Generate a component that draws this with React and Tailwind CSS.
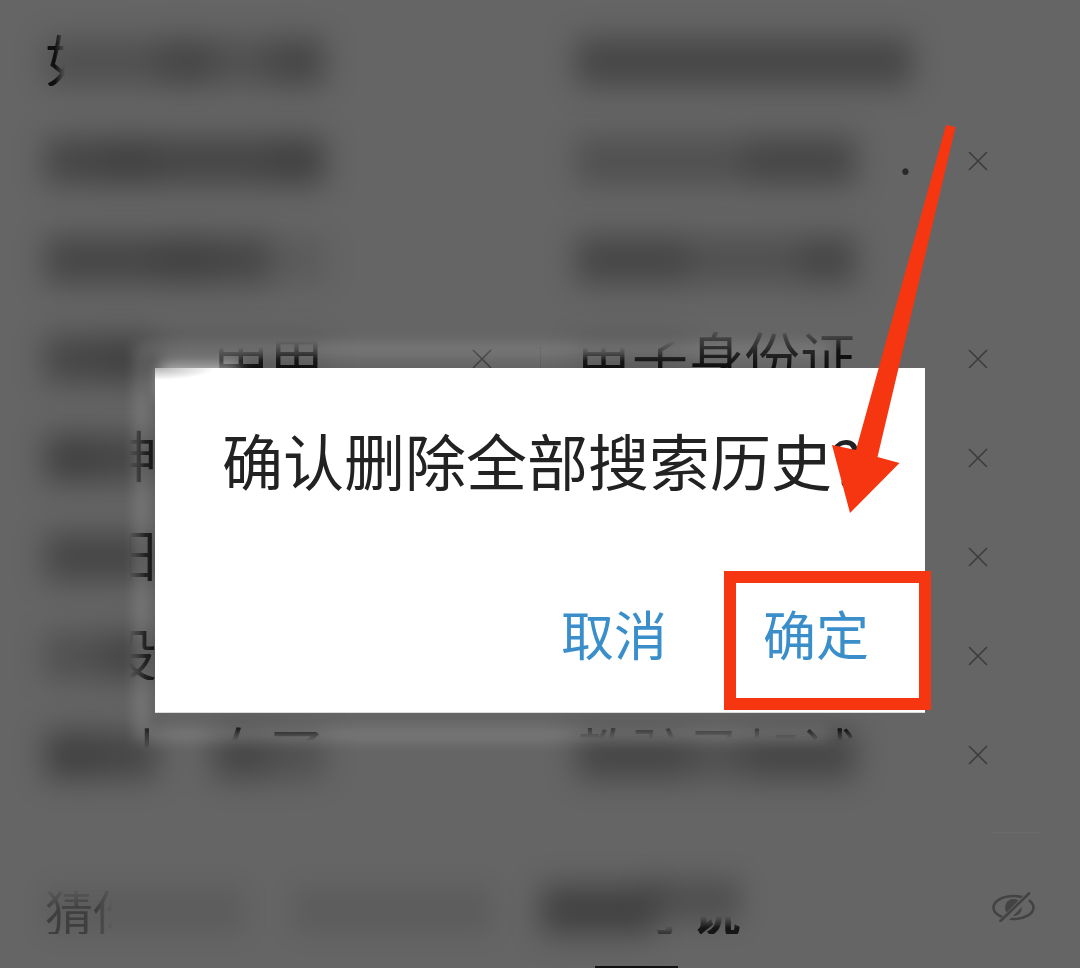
import React from "react";

const SHADES = {
  0: "bg-transparent",
  1: "bg-black/10",
  2: "bg-black/20",
  3: "bg-black/30",
  4: "bg-black/35",
};

const FADES = {
  leftEdge: "[mask-image:linear-gradient(to_right,black_10px,transparent_20px)]",
  rightEdge: "[mask-image:linear-gradient(to_right,transparent_28px,black_44px)]",
  lowerHalf: "[mask-image:linear-gradient(to_bottom,transparent_20px,black_34px)]",
  lowerThird: "[mask-image:linear-gradient(to_bottom,transparent_14px,black_32px)]",
  lowerMost: "[mask-image:linear-gradient(to_bottom,transparent,black_24px)]",
  topEdge: "[mask-image:linear-gradient(to_bottom,black_6px,transparent_18px)]",
  topFaint: "opacity-70 [mask-image:linear-gradient(to_bottom,black_4px,transparent_16px)]",
  topRight:
    "[mask-composite:intersect] [mask-image:linear-gradient(to_bottom,black_8px,transparent_26px),linear-gradient(to_right,transparent_38px,black_40px)]",
  dot: "text-right text-5xl opacity-70",
};

const rows = [
  {
    left: { chars: [["如", "leftEdge"]], smudge: [2, 2, 3, 2, 3] },
    right: { chars: [], smudge: [3, 3, 3, 3, 3, 3] },
  },
  {
    left: { chars: [], smudge: [3, 4, 3, 3, 4] },
    right: { chars: [[""], [""], [""], [""], [""], [".", "dot"]], smudge: [2, 2, 2, 3, 3], close: true },
  },
  {
    left: { chars: [], smudge: [3, 3, 4, 3, 1] },
    right: { chars: [], smudge: [3, 3, 2, 2, 3] },
  },
  {
    left: { chars: [[""], [""], [""], ["申", "lowerHalf"], ["电", "lowerThird"]], smudge: [3, 4, 1, 1, 1], close: true },
    right: {
      chars: [["电", "lowerHalf"], ["子", "lowerThird"], ["身", "lowerMost"], ["份", "lowerMost"], ["证", "lowerMost"]],
      smudge: [1, 1],
      close: true,
    },
    divider: true,
  },
  {
    left: { chars: [[""], ["神", "rightEdge"]], smudge: [4, 3] },
    right: { chars: [], smudge: [0], close: true },
  },
  {
    left: { chars: [[""], ["阳", "rightEdge"]], smudge: [3, 3] },
    right: { chars: [], smudge: [0], close: true },
  },
  {
    left: { chars: [[""], ["设", "rightEdge"]], smudge: [2, 3] },
    right: { chars: [], smudge: [0], close: true },
  },
  {
    left: { chars: [[""], ["引", "topRight"], [""], ["女", "topEdge"], ["了", "topEdge"]], smudge: [4, 3, 0, 3, 2] },
    right: {
      chars: [["教", "topFaint"], ["驻", "topFaint"], ["马", "topFaint"], ["加", "topFaint"], ["试", "topEdge"]],
      smudge: [3, 3, 2, 3, 3],
      close: true,
    },
  },
];

function CloseIcon() {
  return (
    <svg viewBox="0 0 20 20" className="size-5" fill="none" stroke="#3c3c3e" strokeWidth="1.6" aria-hidden="true">
      <path d="M1 1 19 19M19 1 1 19" />
    </svg>
  );
}

function EyeOffIcon() {
  return (
    <svg viewBox="0 0 44 30" className="h-[30px] w-11" fill="none" aria-hidden="true">
      <ellipse cx="21.5" cy="15.5" rx="20" ry="11.500" stroke="#434343" strokeWidth="2.6" />
      <circle cx="21.5" cy="15.5" r="8.5" fill="#434343" />
      <path d="M40 0 9 31" stroke="#656565" strokeWidth="7" />
      <path d="M37 1.5 8.5 29" stroke="#434343" strokeWidth="2.6" strokeLinecap="round" />
    </svg>
  );
}

function Smudge({ shades }) {
  return (
    <div className="absolute inset-y-0 left-0 flex items-center blur-[15px]" aria-hidden="true">
      {shades.map((s, i) => (
        <span key={i} className={`h-12 w-14 ${SHADES[s]}`} />
      ))}
    </div>
  );
}

function HistoryCell({ item, className }) {
  return (
    <div className={`flex h-[99px] items-center justify-between ${className}`}>
      <div className="relative flex h-full items-center pb-2">
        <Smudge shades={item.smudge} />
        <div className="relative flex text-[56px] leading-none text-[#101010]">
          {item.chars.map(([ch, fade], i) => (
            <span key={i} className={`h-14 w-14 ${FADES[fade] || ""}`}>
              {ch}
            </span>
          ))}
        </div>
      </div>
      {item.close && (
        <button type="button" aria-label="删除">
          <CloseIcon />
        </button>
      )}
    </div>
  );
}

function Dialog() {
  return (
    <div className="absolute inset-x-0 top-[368px] flex justify-center">
      <div className="relative w-[770px]">
        <div
          className="absolute -top-6 right-24 -bottom-7 -left-5 border-[12px] border-r-0 border-white/15 blur-[7px]"
          aria-hidden="true"
        />
        <div className="absolute -top-1 left-1 h-8 w-20 bg-white/60 blur-[8px]" aria-hidden="true" />
        <section
          role="dialog"
          aria-labelledby="dialog-title"
          className="relative border-b border-[#dcdcdc] bg-white bg-[radial-gradient(ellipse_60px_12px_at_0_0,#b4b4b4,#ffffff)] pt-[62px] pr-14 pb-[49px] pl-[67px]"
        >
          <h1 id="dialog-title" className="text-[61px] leading-[60px] whitespace-nowrap text-[#222222]">
            确认删除全部搜索历史?
          </h1>
          <div className="mt-[113px] flex justify-end gap-24 text-[53px] leading-[60px] text-[#3a8fcb]">
            <button type="button">取消</button>
            <div className="relative flex">
              <button type="button">确定</button>
              <div className="pointer-events-none absolute -top-8 -right-[62px] -bottom-[47px] -left-[39px] border-12 border-[#f53611]" />
            </div>
          </div>
        </section>
        <svg
          viewBox="0 0 70 390"
          className="pointer-events-none absolute -top-[244px] right-[25px] h-[390px] w-[70px] overflow-visible"
          aria-hidden="true"
        >
          <path d="M116 1 125.600 3 47.500 333 69.500 339 20 389 2 321 26 326Z" fill="#f53611" />
        </svg>
      </div>
    </div>
  );
}

export default function App() {
  return (
    <main className="relative min-h-screen overflow-hidden bg-[#656565] pt-3 font-['Noto_Sans_CJK_SC',sans-serif]">
      <ul>
        {rows.map((row, i) => (
          <li key={i} className="relative grid grid-cols-2">
            <HistoryCell item={row.left} className="pl-[45px] pr-12" />
            <HistoryCell item={row.right} className="pl-9 pr-[92px]" />
            {row.divider && <span className="absolute top-1/2 left-1/2 h-6 w-px -translate-y-1/2 bg-[#5c5c5c]" />}
          </li>
        ))}
      </ul>

      <div className="mt-7 mr-10 ml-auto h-px w-12 bg-[#6b6b6b]" />

      <footer className="mt-[34px] flex h-20 items-center justify-between pr-11 pl-[45px] text-5xl leading-none">
        <div className="flex gap-12 pt-1.5">
          <h2 className="relative flex w-[200px] text-[#3f3f3f]">
            <span className="absolute inset-0 bg-black/8 blur-[12px]" aria-hidden="true" />
            <span className="relative [mask-image:linear-gradient(to_bottom,transparent,black_24px)]">猜</span>
            <span className="relative [mask-image:linear-gradient(to_right,black_4px,transparent_20px)]">你</span>
          </h2>
          <span className="w-[200px] bg-black/8 blur-[12px]" aria-hidden="true" />
          <a href="#novel" className="relative flex w-[200px] justify-end font-bold text-[#161616]">
            <span className="absolute inset-y-0 left-0 w-28 bg-black/35 blur-[15px]" aria-hidden="true" />
            <span className="absolute -top-2 right-0 bottom-3 w-24 bg-black/20 blur-[13px]" aria-hidden="true" />
            <span className="relative opacity-60 [mask-image:linear-gradient(to_bottom,transparent_40px,black_48px)]">小</span>
            <span className="relative [mask-image:linear-gradient(to_bottom,transparent_30px,black_42px)]">说</span>
          </a>
        </div>
        <button type="button" aria-label="隐藏">
          <EyeOffIcon />
        </button>
      </footer>

      <div className="absolute bottom-0 left-[595px] h-0.5 w-[83px] bg-[#111111]" />
      <Dialog />
    </main>
  );
}
